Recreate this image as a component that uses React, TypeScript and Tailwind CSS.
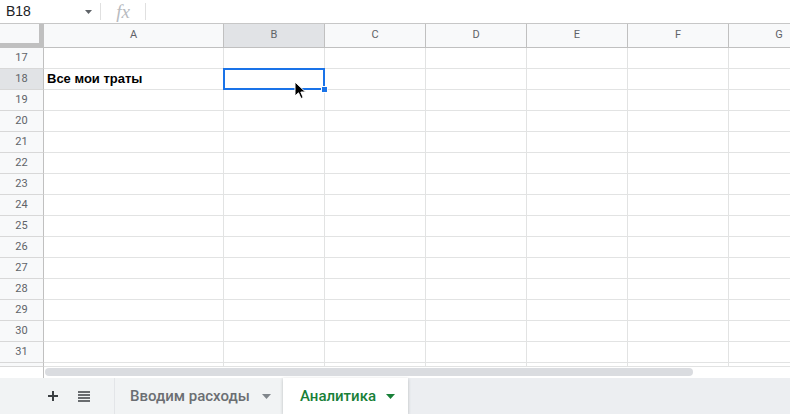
import React from 'react';

const cols = [
  { key: 'A', w: 'w-[180px]' },
  { key: 'B', w: 'w-[101px]' },
  { key: 'C', w: 'w-[101px]' },
  { key: 'D', w: 'w-[101px]' },
  { key: 'E', w: 'w-[101px]' },
  { key: 'F', w: 'w-[101px]' },
  { key: 'G', w: 'w-[101px]' },
];

const rows = [17, 18, 19, 20, 21, 22, 23, 24, 25, 26, 27, 28, 29, 30, 31];

function FormulaBar() {
  return (
    <div className="h-[24px] shrink-0 flex items-center border-b border-[#c7c7c7] bg-white">
      <div className="w-[100px] h-full flex items-center justify-between pl-[6px] pr-[8px]">
        <span className="text-[14px] text-[#202124] font-['Liberation_Sans',sans-serif]">B18</span>
        <svg width="7" height="4" viewBox="0 0 7 4">
          <path d="M0 0 L7 0 L3.5 4 Z" fill="#5f6368" />
        </svg>
      </div>
      <div className="w-px h-[17px] bg-[#e0e0e0]" />
      <div className="w-[44px] flex items-center justify-center">
        <span className="text-[19px] italic text-[#b8bbbf] font-['Liberation_Serif',serif] leading-none">fx</span>
      </div>
      <div className="w-px h-[17px] bg-[#e0e0e0]" />
    </div>
  );
}

function HeaderRow() {
  return (
    <div className="h-[24px] shrink-0 flex border-b border-[#c0c0c0]">
      <div className="w-[44px] shrink-0 relative bg-[#f8f9fa] border-r border-[#c0c0c0]">
        <div className="absolute right-0 top-0 bottom-0 w-[4px] bg-[#c0c0c0]" />
        <div className="absolute left-0 right-0 bottom-0 h-[4px] bg-[#c0c0c0]" />
      </div>
      {cols.map((c) => (
        <div
          key={c.key}
          className={`${c.w} shrink-0 flex items-center justify-center border-r border-[#c0c0c0] text-[11px] text-[#5f6368] ${
            c.key === 'B' ? 'bg-[#e1e3e6]' : 'bg-[#f8f9fa]'
          }`}
        >
          {c.key}
        </div>
      ))}
    </div>
  );
}

function Row({ n }: { n: number }) {
  const selected = n === 18;
  return (
    <div className="h-[21px] shrink-0 flex">
      <div
        className={`w-[44px] shrink-0 flex items-center justify-center border-r border-b border-r-[#c0c0c0] border-b-[#d8d8d8] text-[11px] text-[#5f6368] ${
          selected ? 'bg-[#e1e3e6]' : 'bg-[#f8f9fa]'
        }`}
      >
        {n}
      </div>
      {cols.map((c) => (
        <div
          key={c.key}
          className={`${c.w} shrink-0 relative flex items-center border-r border-b border-[#e2e3e3]`}
        >
          {n === 18 && c.key === 'A' && (
            <span className="pl-[3px] text-[13px] font-bold text-black font-['Liberation_Sans',sans-serif]">
              Все мои траты
            </span>
          )}
          {n === 18 && c.key === 'B' && (
            <>
              <div className="absolute -left-[1px] -top-[1px] w-[102px] h-[22px] border-2 border-[#1a73e8] z-10" />
              <div className="absolute -right-[4px] -bottom-[4px] w-[7px] h-[7px] bg-[#1a73e8] border border-white z-20" />
              <svg
                className="absolute left-[70px] top-[12px] z-30"
                width="13"
                height="20"
                viewBox="0 0 13 20"
              >
                <path
                  d="M1 1 L1 15 L4.5 11.8 L7 17.5 L9.2 16.5 L6.8 11 L11.5 11 Z"
                  fill="#000"
                  stroke="#fff"
                  strokeWidth="1"
                  strokeLinejoin="round"
                />
              </svg>
            </>
          )}
        </div>
      ))}
    </div>
  );
}

function PartialRow() {
  return (
    <div className="h-[4px] shrink-0 flex">
      <div className="w-[44px] shrink-0 bg-[#f8f9fa] border-r border-b border-r-[#c0c0c0] border-b-[#d8d8d8]" />
      {cols.map((c) => (
        <div key={c.key} className={`${c.w} shrink-0 border-r border-b border-[#e2e3e3]`} />
      ))}
    </div>
  );
}

function ScrollRow() {
  return (
    <div className="h-[11px] shrink-0 flex bg-white">
      <div className="w-[44px] shrink-0 border-r border-[#c0c0c0]" />
      <div className="flex-1 pl-[1px] pt-[1px]">
        <div className="w-[648px] h-[8px] rounded-full bg-[#dadce0]" />
      </div>
    </div>
  );
}

function Caret({ color }: { color: string }) {
  return (
    <svg width="9" height="5" viewBox="0 0 9 5">
      <path d="M0 0 L9 0 L4.5 5 Z" fill={color} />
    </svg>
  );
}

function TabBar() {
  return (
    <div className="h-[36px] shrink-0 flex bg-[#eceef1] font-['Roboto',sans-serif]">
      <div className="w-[115px] shrink-0 flex items-center bg-[#f1f3f4] border-r border-[#e3e5e8]">
        <svg className="ml-[47px]" width="12" height="12" viewBox="0 0 12 12">
          <path d="M6 1 V11 M1 6 H11" stroke="#3c4043" strokeWidth="2" />
        </svg>
        <svg className="ml-[19px]" width="12" height="11" viewBox="0 0 12 11">
          <path d="M0 1 H12 M0 4 H12 M0 7 H12 M0 10 H12" stroke="#3c4043" strokeWidth="1.6" />
        </svg>
      </div>
      <div className="w-[168px] shrink-0 flex items-center bg-[#f1f3f4] pl-[15px]">
        <span className="text-[15px] font-medium text-[#6b6e72]">Вводим расходы</span>
        <span className="ml-[12px] flex items-center">
          <Caret color="#80868b" />
        </span>
      </div>
      <div className="w-[125px] shrink-0 flex items-center bg-white pl-[17px] shadow-[0_1px_3px_rgba(60,64,67,0.3)]">
        <span className="text-[15px] font-medium text-[#188038]">Аналитика</span>
        <span className="ml-[10px] flex items-center">
          <Caret color="#188038" />
        </span>
      </div>
      <div className="flex-1" />
    </div>
  );
}

export default function App(): React.ReactElement {
  return (
    <div className="w-[790px] h-[414px] flex flex-col overflow-hidden bg-white font-['Roboto',sans-serif]">
      <FormulaBar />
      <div className="flex-1 flex flex-col overflow-hidden">
        <HeaderRow />
        {rows.map((n) => (
          <Row key={n} n={n} />
        ))}
        <PartialRow />
        <ScrollRow />
      </div>
      <TabBar />
    </div>
  );
}
